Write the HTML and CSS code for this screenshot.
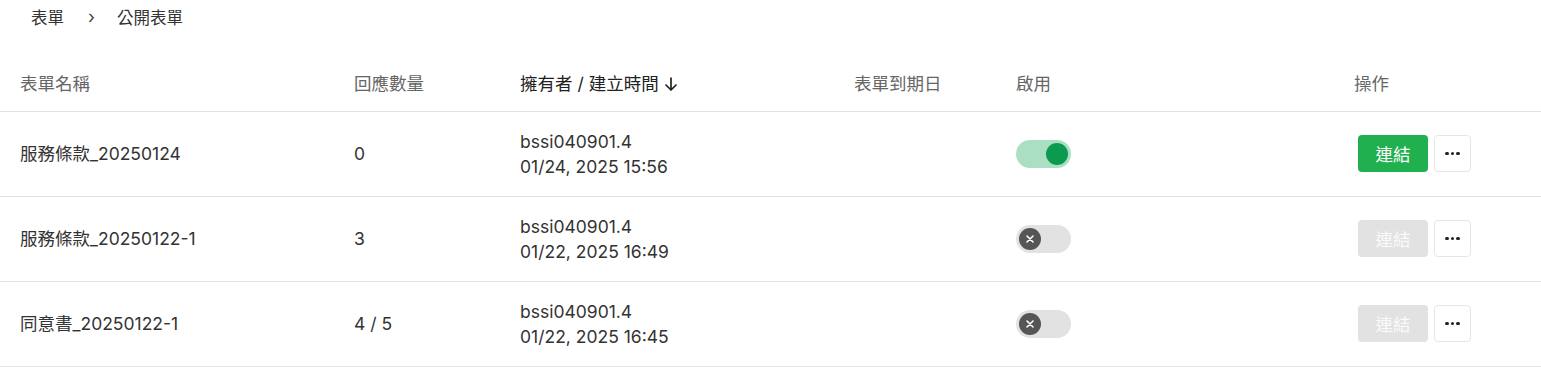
FILE: index.html
```html
<!DOCTYPE html>
<html lang="zh-Hant">
<head>
<meta charset="utf-8">
<link rel="stylesheet" href="styles.css">
</head>
<body>
<nav class="crumbs">
  <span>表單</span>
  <span class="sep">›</span>
  <span>公開表單</span>
</nav>
<table class="tbl">
  <colgroup>
    <col class="c1"><col class="c2"><col class="c3"><col class="c4"><col class="c5"><col class="c6">
  </colgroup>
  <thead>
    <tr>
      <th>表單名稱</th>
      <th>回應數量</th>
      <th class="sorted">擁有者 / 建立時間<svg class="arrow" viewBox="0 0 16 18" width="16" height="18"><path d="M8 3v12M3 10l5 5 5-5" fill="none" stroke="#222" stroke-width="1.7" stroke-linecap="round" stroke-linejoin="round"/></svg></th>
      <th>表單到期日</th>
      <th>啟用</th>
      <th>操作</th>
    </tr>
  </thead>
  <tbody>
    <tr>
      <td>服務條款_20250124</td>
      <td>0</td>
      <td><div>bssi040901.4</div><div>01/24, 2025 15:56</div></td>
      <td></td>
      <td><span class="toggle on"><span class="knob"></span></span></td>
      <td><div class="acts"><button class="link">連結</button><button class="more"><span></span><span></span><span></span></button></div></td>
    </tr>
    <tr>
      <td>服務條款_20250122-1</td>
      <td>3</td>
      <td><div>bssi040901.4</div><div>01/22, 2025 16:49</div></td>
      <td></td>
      <td><span class="toggle off"><span class="knob"><svg viewBox="0 0 10 10" width="10" height="10"><path d="M2 2l6 6M8 2 2 8" stroke="#fff" stroke-width="1.6" stroke-linecap="round"/></svg></span></span></td>
      <td><div class="acts"><button class="link dis">連結</button><button class="more"><span></span><span></span><span></span></button></div></td>
    </tr>
    <tr>
      <td>同意書_20250122-1</td>
      <td>4 / 5</td>
      <td><div>bssi040901.4</div><div>01/22, 2025 16:45</div></td>
      <td></td>
      <td><span class="toggle off"><span class="knob"><svg viewBox="0 0 10 10" width="10" height="10"><path d="M2 2l6 6M8 2 2 8" stroke="#fff" stroke-width="1.6" stroke-linecap="round"/></svg></span></span></td>
      <td><div class="acts"><button class="link dis">連結</button><button class="more"><span></span><span></span><span></span></button></div></td>
    </tr>
  </tbody>
</table>
</body>
</html>
```
FILE: styles.css
```css
* { box-sizing: border-box; }
body {
  margin: 0;
  font-family: Inter, "Noto Sans CJK TC", sans-serif;
  color: #333;
  background: #fff;
}
.crumbs {
  display: flex;
  align-items: center;
  height: 33px;
  padding-left: 31px;
  font-size: 16.5px;
  color: #333;
}
.crumbs .sep {
  margin: 0 22px 0 24px;
  font-size: 18px;
  color: #444;
}
.tbl {
  width: 100%;
  border-collapse: collapse;
  table-layout: fixed;
  margin-top: 22px;
}
.c1 { width: 334px; }
.c2 { width: 166px; }
.c3 { width: 334px; }
.c4 { width: 162px; }
.c5 { width: 338px; }
.c6 { width: 207px; }
th {
  text-align: left;
  font-weight: 400;
  font-size: 17.5px;
  color: #666;
  height: 56px;
  padding: 0 20px;
  border-bottom: 1px solid #e3e3e3;
}
th.sorted { color: #222; }
.arrow { vertical-align: -3px; margin-left: 4px; }
td {
  height: 85px;
  padding: 0 20px;
  font-size: 17.5px;
  color: #333;
  border-bottom: 1px solid #e3e3e3;
  line-height: 25px;
  vertical-align: middle;
}
.toggle {
  display: flex;
  align-items: center;
  width: 55px;
  height: 28px;
  border-radius: 14px;
  padding: 0 3px;
}
.toggle.on { background: #aadfc3; justify-content: flex-end; }
.toggle.off { background: #e2e2e2; justify-content: flex-start; }
.knob {
  width: 22px;
  height: 22px;
  border-radius: 50%;
  display: flex;
  align-items: center;
  justify-content: center;
}
.on .knob { background: #0c9a4e; }
.off .knob { background: #555; }
.acts {
  display: flex;
  gap: 6px;
  padding-left: 4px;
}
.link {
  width: 70px;
  height: 37px;
  border: none;
  border-radius: 4px;
  background: #21b04f;
  color: #fff;
  font-family: Inter, "Noto Sans CJK TC", sans-serif;
  font-size: 17.5px;
  padding: 0;
}
.link.dis { background: #e2e2e2; color: #fafafa; }
.more {
  width: 37px;
  height: 37px;
  border: 1px solid #e6e6e6;
  border-radius: 4px;
  background: #fff;
  display: flex;
  align-items: center;
  justify-content: center;
  gap: 2px;
  padding: 0;
}
.more span {
  width: 3.5px;
  height: 3.5px;
  border-radius: 50%;
  background: #222;
}
```
